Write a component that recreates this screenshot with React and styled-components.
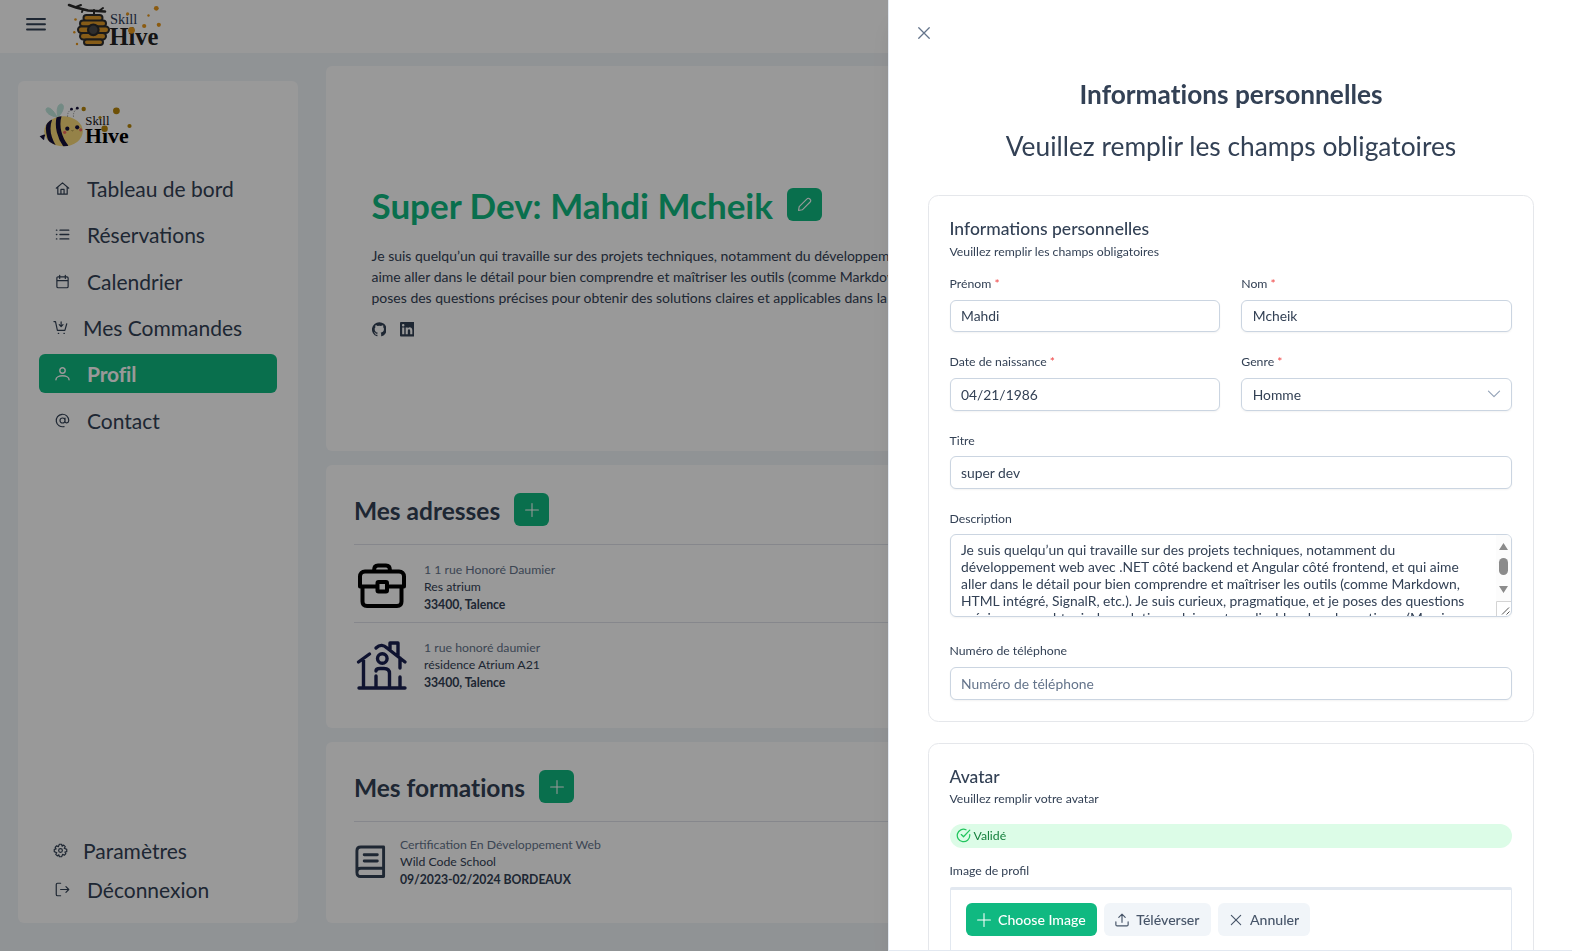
import React from 'react';
import styled, { createGlobalStyle } from 'styled-components';

const GlobalStyle = createGlobalStyle`
  html { font-size: 14px; }
  body {
    margin: 0;
    background: #f1f5f9;
    color: #334155;
    font-family: Lato, "Open Sans", sans-serif;
    overflow: hidden;
  }
  *, *::before, *::after { box-sizing: border-box; }
  h1, h2, h3, p { margin: 0; }
  button, input { font-family: inherit; }
`;

const Page = styled.div`
  height: 951px;
  display: flex;
  flex-direction: column;
  overflow: hidden;
`;

const Topbar = styled.header`
  height: 53px;
  flex: none;
  background: #fff;
  display: flex;
  align-items: flex-start;
  padding-left: 26px;
`;

const MenuIcon = styled.svg`
  width: 20px;
  height: 14px;
  margin: 17px 21px 0 0;
`;

const Layout = styled.div`
  flex: 1;
  display: flex;
  min-height: 0;
`;

const Sidebar = styled.aside`
  width: 280px;
  height: 842px;
  flex: none;
  margin: 28px 27.5px 0 18px;
  padding: 18px 21px 14px;
  background: #fff;
  border-radius: 6px;
  display: flex;
  flex-direction: column;
`;

const Nav = styled.nav`
  display: flex;
  flex-direction: column;
  gap: ${p => p.$gap || 0}px;
`;

const NavItem = styled.a`
  height: 39.2px;
  display: flex;
  align-items: center;
  gap: ${p => (p.$tight ? 16 : 18)}px;
  padding-left: ${p => (p.$tight ? 14 : 16)}px;
  border-radius: 6px;
  font-size: 21px;
  line-height: 25px;
  font-weight: ${p => (p.$active ? 700 : 400)};
  letter-spacing: ${p => (p.$active ? '-0.15px' : 'normal')};
  font-variant-ligatures: common-ligatures;
  color: ${p => (p.$active ? '#fff' : '#334155')};
  background: ${p => (p.$active ? '#10b981' : 'transparent')};
`;

const Icon = styled.svg`
  width: ${p => p.$size || 14}px;
  height: ${p => p.$size || 14}px;
  flex: none;
  fill: none;
  stroke: currentColor;
  stroke-width: ${p => p.$stroke || 1.8};
  stroke-linecap: round;
  stroke-linejoin: round;
`;

const NavIcon = styled(Icon)`
  width: 15px;
  height: 15px;
  margin: 0 -0.5px;
`;

const Spacer = styled.div`
  flex: 1;
`;

const Main = styled.main`
  flex: 1;
  padding: 13px 18px 0 0;
  display: flex;
  flex-direction: column;
  gap: 14px;
`;

const Card = styled.section`
  background: #fff;
  border-radius: 6px;
  height: ${p => p.$height}px;
  flex: none;
  padding: ${p => p.$pad || '28px 28px 28px 28.5px'};
`;

const ProfileTitle = styled.h1`
  font-size: 35px;
  line-height: 34px;
  font-weight: 700;
  color: #10b981;
`;

const TitleRow = styled.div`
  display: flex;
  align-items: flex-start;
  gap: 14px;
`;

const SquareButton = styled.button`
  width: 35px;
  height: 33px;
  padding: 0;
  border: 0;
  border-radius: 6px;
  background: #10b981;
  color: #fff;
  display: flex;
  align-items: center;
  justify-content: center;
`;

const Bio = styled.p`
  margin-top: 23px;
  font-size: 14px;
  line-height: 21px;
  white-space: nowrap;
`;

const Socials = styled.div`
  display: flex;
  gap: 13.5px;
  margin-top: 14px;
`;

const SocialIcon = styled.svg`
  width: 14.5px;
  height: 14.5px;
  fill: currentColor;
`;

const CardTitle = styled.h2`
  font-size: 24.5px;
  line-height: 35px;
  font-weight: 700;
  font-variant-ligatures: none;
`;

const Entry = styled.div`
  height: 78px;
  border-top: 1px solid #dfe2ea;
  margin-top: ${p => (p.$first ? 16 : 0)}px;
  padding-top: ${p => p.$top}px;
  display: flex;
  gap: ${p => p.$gap}px;
`;

const EntryText = styled.div`
  display: flex;
  flex-direction: column;
  font-size: 12.25px;
  line-height: 17px;
`;

const Muted = styled.span`
  color: #64748b;
`;

const Strong = styled.span`
  font-weight: 700;
  line-height: 20px;
  letter-spacing: -0.05px;
`;

const BookSlot = styled.div`
  padding-top: 9px;
  display: flex;
  align-items: flex-start;
`;

const Mask = styled.div`
  position: fixed;
  inset: 0;
  background: rgba(0, 0, 0, 0.4);
`;

const Drawer = styled.aside`
  position: fixed;
  top: 0;
  right: 0;
  bottom: 0;
  width: 684px;
  background: #fff;
  border-left: 1px solid #e2e8f0;
  border-bottom: 1px solid #e2e8f0;
  box-shadow: 0 20px 25px -5px rgba(0, 0, 0, 0.1), 0 8px 10px -6px rgba(0, 0, 0, 0.1);
  padding: 26px 38px 0 39px;
  display: flex;
  flex-direction: column;
  overflow: hidden;
`;

const CloseButton = styled.button`
  width: 14px;
  height: 14px;
  padding: 0;
  border: 0;
  background: none;
  color: #64748b;
  margin-left: -11px;
  display: flex;
  flex: none;
`;

const DrawerTitle = styled.h2`
  margin-top: 38px;
  font-size: 26.25px;
  line-height: 32px;
  font-weight: 700;
  text-align: center;
  font-variant-ligatures: none;
`;

const DrawerSubtitle = styled.p`
  margin: 20px 0 33px;
  font-size: 26.35px;
  line-height: 32px;
  text-align: center;
`;

const Panel = styled.section`
  border: 1px solid #e5e7eb;
  border-radius: 10.5px;
  padding: 21px 21px 21px 20.5px;
  margin-bottom: 21px;
  flex: none;
`;

const PanelTitle = styled.h3`
  font-size: 17.5px;
  line-height: 24.5px;
  font-weight: 500;
`;

const PanelHint = styled.p`
  margin-top: 1px;
  font-size: 12.25px;
  line-height: 17.5px;
`;

const Fields = styled.div`
  margin-top: 15px;
  display: grid;
  grid-template-columns: 1fr 1fr;
  gap: 21px;
`;

const Field = styled.div`
  grid-column: ${p => (p.$wide ? 'span 2' : 'auto')};
  padding-bottom: ${p => p.$after || 0}px;
`;

const Label = styled.label`
  display: block;
  margin-bottom: 7px;
  font-size: 12.25px;
  line-height: 17.5px;
`;

const Required = styled.span`
  color: #ef4444;
`;

const Input = styled.input`
  display: block;
  width: 100%;
  height: 32.8px;
  padding: 0 10.5px;
  border: 1px solid #cbd5e1;
  border-radius: 6px;
  box-shadow: 0 1px 2px rgba(18, 18, 23, 0.05);
  font-size: 13.85px;
  color: #334155;
  background: #fff;
  &::placeholder { color: #64748b; }
`;

const Select = styled.div`
  height: 32.8px;
  padding: 0 10.5px;
  border: 1px solid #cbd5e1;
  border-radius: 6px;
  box-shadow: 0 1px 2px rgba(18, 18, 23, 0.05);
  font-size: 13.85px;
  display: flex;
  align-items: center;
  justify-content: space-between;
`;

const TextBox = styled.div`
  height: 83px;
  border: 1px solid #cbd5e1;
  border-radius: 6px;
  box-shadow: 0 1px 2px rgba(18, 18, 23, 0.05);
  display: flex;
  overflow: hidden;
`;

const TextBoxContent = styled.div`
  flex: 1;
  padding: 7px 0 0 10.5px;
  font-size: 13.85px;
  line-height: 16.8px;
  white-space: nowrap;
`;

const Scrollbar = styled.svg`
  width: 15px;
  height: 81px;
  flex: none;
`;

const Status = styled.div`
  margin-top: 16px;
  height: 24px;
  border-radius: 12px;
  background: #dcfce7;
  color: #15803d;
  display: flex;
  align-items: center;
  gap: 3px;
  padding-left: 6px;
  font-size: 12.25px;
`;

const StatusIcon = styled(Icon)`
  color: #22c55e;
`;

const UploadLabel = styled(Label)`
  margin-top: 14px;
  margin-bottom: 7.5px;
`;

const Upload = styled.div`
  height: 120px;
  border: 1px solid #e2e8f0;
  border-top: 3px solid #e2e8f0;
  border-radius: 2px 2px 0 0;
  padding: 13px 15px;
  display: flex;
  gap: 7px;
`;

const UploadButton = styled.button`
  height: 33px;
  padding: 0 11px 0 11.5px;
  border: 0;
  border-radius: 6px;
  background: ${p => (p.$primary ? '#10b981' : '#f1f5f9')};
  color: ${p => (p.$primary ? '#fff' : '#475569')};
  font-size: 14.1px;
  font-weight: 500;
  display: flex;
  align-items: center;
  gap: 7px;
  white-space: nowrap;
  ${Icon} { margin-top: 2px; }
`;

const TopLogoSvg = styled.svg`
  width: 96px;
  height: 50px;
`;

const BeeLogoSvg = styled.svg`
  width: 96px;
  height: 52px;
  margin-bottom: 18px;
`;

const serif = '"Liberation Serif", "Times New Roman", serif';

function HiveLogo() {
  return (
    <TopLogoSvg viewBox="67 0 96 50">
      <g stroke="#2b2b2b" fill="none" strokeLinecap="round">
        <path d="M69 5l7 2.5 12 3 17 1" strokeWidth="2.6" />
        <path d="M76 7l5-2M83 9l-1 3M94 10v5M99 11l4-3" strokeWidth="2" />
      </g>
      <g stroke="#2e2e2e" strokeWidth="2" fill="#e09a28">
        <rect x="83.5" y="15" width="19" height="6" rx="3" />
        <rect x="80" y="20.5" width="26" height="6" rx="3" />
        <rect x="78" y="26.5" width="31" height="6.5" rx="3.2" />
        <rect x="80" y="33" width="26" height="6.5" rx="3.2" />
        <rect x="84" y="39.5" width="19" height="5.5" rx="2.7" />
      </g>
      <circle cx="93.3" cy="29.8" r="5.3" fill="#4b4b4b" stroke="#2b2b2b" strokeWidth="2.2" />
      <g fill="#e8981c">
        <circle cx="156.3" cy="8.3" r="2.4" />
        <circle cx="148.5" cy="15.5" r="1.2" />
        <circle cx="144.2" cy="26" r="2.1" />
        <circle cx="158.8" cy="24.8" r="2.1" />
        <circle cx="75.5" cy="19.5" r="1.3" />
        <circle cx="74.3" cy="32.3" r="1.2" />
        <circle cx="77" cy="44" r="1.2" />
      </g>
      <text x="110" y="24" fontFamily={serif} fontSize="14.5" fill="#2d3a55">Skill</text>
      <text x="109.5" y="45" fontFamily={serif} fontSize="24.5" fontWeight="700" fill="#222">Hive</text>
      <circle cx="127.6" cy="13.8" r="1.6" fill="#e8981c" />
      <circle cx="131.5" cy="30.3" r="3.4" fill="#e8981c" />
    </TopLogoSvg>
  );
}

function BeeLogo() {
  return (
    <BeeLogoSvg viewBox="39 99 96 52">
      <clipPath id="bee-body">
        <ellipse cx="63.5" cy="131.3" rx="19.3" ry="15" />
      </clipPath>
      <path d="M57 117c-7-1-11-4-11-8 2-3 7 0 11 8zM58 117c-2-8 0-13 3.500-13 3.500 1 2 8-3.500 13z" fill="#bfe6dc" stroke="#bfe6dc" />
      <path d="M45 135l-4 1.500 3 3" fill="#15103a" stroke="#15103a" strokeWidth="1.500" />
      <ellipse cx="63.500" cy="131.300" rx="19.300" ry="15" fill="#f8d978" />
      <path clipPath="url(#bee-body)" d="M50 119c-3.500 9-2 18 4 28M59.500 115c-3.500 11 0 23 7 32" fill="none" stroke="#15103a" strokeWidth="4.600" />
      <path d="M67.500 117c0-4 1-6 3.500-7M73.500 117c-.5-4 1-7 3.500-8" fill="none" stroke="#777" strokeWidth=".6" strokeDasharray="1.500 1" />
      <g fill="#15103a">
        <circle cx="71.500" cy="109.200" r="1.400" />
        <circle cx="77.300" cy="108.200" r="1.400" />
        <circle cx="67.300" cy="128.700" r="2.100" />
        <circle cx="77.200" cy="127.300" r="2.100" />
      </g>
      <circle cx="64.700" cy="132.300" r="1.600" fill="#f4695f" />
      <circle cx="80.700" cy="129.800" r="1.600" fill="#f4695f" />
      <path d="M71.500 130.500q1 .8 2-.2" fill="none" stroke="#6b5a2a" strokeWidth=".6" />
      <text x="85.300" y="124.700" fontFamily={serif} fontSize="12.800" fill="#111">Skill</text>
      <text x="85" y="142.800" fontFamily={serif} fontSize="21.800" fontWeight="700" fill="#000">Hive</text>
      <g fill="#b8860b">
        <circle cx="83.700" cy="109" r="2.200" />
        <circle cx="116.400" cy="110.800" r="3.400" />
        <circle cx="129.500" cy="126" r="2.100" />
        <circle cx="104.600" cy="128.700" r="3.200" />
        <circle cx="100" cy="117.500" r="1.600" />
      </g>
    </BeeLogoSvg>
  );
}

const glyphs = {
  home: <path d="M2 11.500L12 3l10 8.500M4.500 9.500V21h15V9.500M9.500 21v-7.500h5V21" />,
  list: <path d="M8 5h14M8 12h14M8 19h14M2.300 5h.6M2.300 12h.6M2.300 19h.6" strokeWidth="2.200" />,
  calendar: <path d="M5 4.500h14a2 2 0 0 1 2 2V20a2 2 0 0 1-2 2H5a2 2 0 0 1-2-2V6.500a2 2 0 0 1 2-2zM3 10.500h18M7.500 2v5M16.500 2v5" />,
  cart: <path d="M1.500 2.500H4l3 14h12L22 6M13 3v7M10 7.500l3 3 3-3M8.500 21.500h.6M17.500 21.500h.6" />,
  user: <path d="M12 11.500a4.300 4.300 0 1 0 0-8.600 4.300 4.300 0 0 0 0 8.600zM1.500 22c0-8.500 21-8.500 21 0" />,
  at: <path d="M16 12a4 4 0 1 1-8 0 4 4 0 0 1 8 0zM16 8v5.500c0 3.500 6 3 6-1.500A10 10 0 1 0 14.500 21.700" />,
  cog: <path d="M12 15a3 3 0 1 0 0-6 3 3 0 0 0 0 6zM10.200 2h3.600l.7 3 2.600-1.600 2.500 2.500L18 8.500l4 1.700v3.600l-3 .7 1.600 2.600-2.500 2.500L15.500 18l-1.700 4h-3.600l-.7-3-2.600 1.600-2.500-2.500L6 15.500l-4-1.700v-3.600l3-.7-1.600-2.600 2.500-2.500L8.500 6z" />,
  logout: <path d="M9 2H4a2 2 0 0 0-2 2v16a2 2 0 0 0 2 2h5M9 12h13M17.500 7.500L22 12l-4.500 4.500" />,
  pencil: <path d="M2.500 21.500l1-6L16 3a2.600 2.600 0 0 1 4-.2l1.200 1.200a2.600 2.600 0 0 1-.2 4L8.500 20.500z" />,
  plus: <path d="M12 1v22M1 12h22" />,
  times: <path d="M3 3l18 18M21 3L3 21" />,
  chevron: <path d="M2.500 7l9.500 9.500L21.500 7" />,
  upload: <path d="M12 16V2M6.500 7.500L12 2l5.500 5.500M1.500 15v5a2 2 0 0 0 2 2h17a2 2 0 0 0 2-2v-5" />,
  check: <path d="M22 10.500V12A10 10 0 1 1 16 2.800M22 3.500L12 14l-3.500-3.500" />,
};

const topItems = [
  { icon: 'home', label: 'Tableau de bord' },
  { icon: 'list', label: 'Réservations' },
  { icon: 'calendar', label: 'Calendrier' },
  { icon: 'cart', label: 'Mes Commandes', tight: true },
  { icon: 'user', label: 'Profil', active: true },
  { icon: 'at', label: 'Contact' },
];

const bottomItems = [
  { icon: 'cog', label: 'Paramètres', tight: true },
  { icon: 'logout', label: 'Déconnexion' },
];

function NavList({ items, gap }) {
  return (
    <Nav $gap={gap}>
      {items.map(item => (
        <NavItem key={item.label} $active={item.active} $tight={item.tight}>
          <NavIcon viewBox="0 0 24 24" $stroke={item.active ? 2.3 : 1.9}>{glyphs[item.icon]}</NavIcon>
          {item.label}
        </NavItem>
      ))}
    </Nav>
  );
}

function Briefcase() {
  return (
    <Icon viewBox="0 1.5 56 56" $size={56} $stroke={4} color="#000">
      <path d="M20 11c0-4 2-5 4-5h8c2 0 4 1 4 5M11 12h34c3 0 5 2 5 5v10H6V17c0-3 2-5 5-5zM8.500 28v14c0 3 1.500 4.500 4.500 4.500h30c3 0 4.500-1.500 4.500-4.500V28" />
      <rect x="23.500" y="22.500" width="9.500" height="9.500" rx="1" fill="#fff" />
    </Icon>
  );
}

function House() {
  return (
    <Icon viewBox="0 1 56 56" $size={56} $stroke={3.4} color="#1a2150">
      <path d="M5 50h46M9.500 50V22M4.500 24l11-8M22 10c4-4 8-3 11 0l18 14M36 11V5h8v13M46 20v10M46 39v11M22 38v12M22 33c0-2 2-2.500 4-2.500h4c4 0 5.500 2 5.500 5V50" />
      <circle cx="28.300" cy="20.500" r="4.800" />
    </Icon>
  );
}

function Book() {
  return (
    <Icon viewBox="0 0 32 34" $size={33} $stroke={3}>
      <path d="M29.500 24V2H6C3.500 2 2 3.500 2 6v22c0 3 1.500 4.500 4 4.500h23.500V24H6c-2.500 0-4 1.500-4 4M9.500 10h13.500M9.500 16.500h13.500M29.500 24v8" />
    </Icon>
  );
}

function RequiredLabel({ children }) {
  return <Label>{children} <Required>*</Required></Label>;
}

export default function App() {
  return (
    <>
      <GlobalStyle />
      <Page>
        <Topbar>
          <MenuIcon viewBox="0 0 20 14">
            <path d="M1 2h18M1 7.200h18M1 12.500h18" stroke="#334155" strokeWidth="1.900" strokeLinecap="round" />
          </MenuIcon>
          <HiveLogo />
        </Topbar>
        <Layout>
          <Sidebar>
            <BeeLogo />
            <NavList items={topItems} gap={7.1} />
            <Spacer />
            <NavList items={bottomItems} gap={0} />
          </Sidebar>
          <Main>
            <Card $height={385} $pad="122px 46px">
              <TitleRow>
                <ProfileTitle>Super Dev: Mahdi Mcheik</ProfileTitle>
                <SquareButton><Icon viewBox="0 0 24 24" $size={15}>{glyphs.pencil}</Icon></SquareButton>
              </TitleRow>
              <Bio>
                Je suis quelqu’un qui travaille sur des projets techniques, notamment du développement web avec .NET<br />
                aime aller dans le détail pour bien comprendre et maîtriser les outils (comme Markdown, HTML intégré<br />
                poses des questions précises pour obtenir des solutions claires et applicables dans la pratique.
              </Bio>
              <Socials>
                <SocialIcon viewBox="0 0 24 24">
                  <path d="M12 .3a12 12 0 0 0-3.800 23.400c.6.1.8-.3.8-.6v-2c-3.300.7-4-1.600-4-1.600-.6-1.400-1.400-1.800-1.400-1.800-1-.7.1-.7.1-.7 1.200.1 1.900 1.200 1.900 1.200 1 1.900 2.800 1.300 3.500 1 .1-.8.4-1.300.8-1.600-2.700-.3-5.500-1.300-5.500-6 0-1.200.5-2.300 1.300-3.100-.2-.4-.6-1.600 0-3.200 0 0 1-.3 3.400 1.200a11.500 11.500 0 0 1 6 0c2.300-1.500 3.300-1.200 3.300-1.200.6 1.600.2 2.800.1 3.200.8.8 1.300 1.900 1.300 3.200 0 4.600-2.800 5.600-5.500 5.900.5.4.9 1 .9 2.200v3.300c0 .3.1.7.8.6A12 12 0 0 0 12 .3" />
                </SocialIcon>
                <SocialIcon viewBox="0 0 24 24">
                  <path fillRule="evenodd" d="M1.500 0h21A1.500 1.500 0 0 1 24 1.500v21a1.500 1.500 0 0 1-1.500 1.500h-21A1.500 1.500 0 0 1 0 22.500v-21A1.500 1.500 0 0 1 1.500 0zM3.600 9v11.400h3.500V9zM5.300 3.300a2.100 2.100 0 1 0 0 4.200 2.100 2.100 0 0 0 0-4.200zM9.400 9v11.400h3.500v-5.700c0-3.600 4-3.400 4 0v5.700h3.500v-6.200c0-6-5.300-6.500-7.500-3.700V9z" />
                </SocialIcon>
              </Socials>
            </Card>
            <Card $height={263}>
              <TitleRow>
                <CardTitle>Mes adresses</CardTitle>
                <SquareButton><Icon viewBox="0 0 24 24">{glyphs.plus}</Icon></SquareButton>
              </TitleRow>
              <Entry $first $top={15.5} $gap={14}>
                <Briefcase />
                <EntryText>
                  <Muted>1 1 rue Honoré Daumier</Muted>
                  <span>Res atrium</span>
                  <Strong>33400, Talence</Strong>
                </EntryText>
              </Entry>
              <Entry $top={15.5} $gap={14}>
                <House />
                <EntryText>
                  <Muted>1 rue honoré daumier</Muted>
                  <span>résidence Atrium A21</span>
                  <Strong>33400, Talence</Strong>
                </EntryText>
              </Entry>
            </Card>
            <Card $height={181}>
              <TitleRow>
                <CardTitle>Mes formations</CardTitle>
                <SquareButton><Icon viewBox="0 0 24 24">{glyphs.plus}</Icon></SquareButton>
              </TitleRow>
              <Entry $first $top={13.5} $gap={13}>
                <BookSlot><Book /></BookSlot>
                <EntryText>
                  <Muted>Certification En Développement Web</Muted>
                  <span>Wild Code School</span>
                  <Strong>09/2023-02/2024 BORDEAUX</Strong>
                </EntryText>
              </Entry>
            </Card>
          </Main>
        </Layout>
      </Page>
      <Mask />
      <Drawer>
        <CloseButton><Icon viewBox="0 0 24 24" $stroke={2.2}>{glyphs.times}</Icon></CloseButton>
        <DrawerTitle>Informations personnelles</DrawerTitle>
        <DrawerSubtitle>Veuillez remplir les champs obligatoires</DrawerSubtitle>
        <Panel>
          <PanelTitle>Informations personnelles</PanelTitle>
          <PanelHint>Veuillez remplir les champs obligatoires</PanelHint>
          <Fields>
            <Field>
              <RequiredLabel>Prénom</RequiredLabel>
              <Input defaultValue="Mahdi" />
            </Field>
            <Field>
              <RequiredLabel>Nom</RequiredLabel>
              <Input defaultValue="Mcheik" />
            </Field>
            <Field>
              <RequiredLabel>Date de naissance</RequiredLabel>
              <Input defaultValue="04/21/1986" />
            </Field>
            <Field>
              <RequiredLabel>Genre</RequiredLabel>
              <Select>
                Homme
                <Icon viewBox="0 0 24 24" color="#94a3b8" $stroke={2}>{glyphs.chevron}</Icon>
              </Select>
            </Field>
            <Field $wide>
              <Label>Titre</Label>
              <Input defaultValue="super dev" />
            </Field>
            <Field $wide $after={4}>
              <Label>Description</Label>
              <TextBox>
                <TextBoxContent>
                  Je suis quelqu’un qui travaille sur des projets techniques, notamment du<br />
                  développement web avec .NET côté backend et Angular côté frontend, et qui aime<br />
                  aller dans le détail pour bien comprendre et maîtriser les outils (comme Markdown,<br />
                  HTML intégré, SignalR, etc.). Je suis curieux, pragmatique, et je poses des questions<br />
                  précises pour obtenir des solutions claires et applicables dans la pratique. (Merci
                </TextBoxContent>
                <Scrollbar viewBox="0 0 15 81">
                  <rect width="15" height="66" fill="#fcfcfc" />
                  <path d="M7.500 8l4.500 7H3z M7.500 58l4.500-7H3z" fill="#8b8b8b" />
                  <rect x="3" y="23" width="9" height="17" rx="4.500" fill="#8b8b8b" />
                  <path d="M.5 81V66.500H15" fill="none" stroke="#d4d4d4" />
                  <path d="M6 79.500l7-7M10.500 79.500l3-3" stroke="#555" />
                </Scrollbar>
              </TextBox>
            </Field>
            <Field $wide>
              <Label>Numéro de téléphone</Label>
              <Input placeholder="Numéro de téléphone" />
            </Field>
          </Fields>
        </Panel>
        <Panel>
          <PanelTitle>Avatar</PanelTitle>
          <PanelHint>Veuillez remplir votre avatar</PanelHint>
          <Status>
            <StatusIcon viewBox="0 0 24 24" $size={15} $stroke={2}>{glyphs.check}</StatusIcon>
            Validé
          </Status>
          <UploadLabel>Image de profil</UploadLabel>
          <Upload>
            <UploadButton $primary><Icon viewBox="0 0 24 24">{glyphs.plus}</Icon>Choose Image</UploadButton>
            <UploadButton><Icon viewBox="0 0 24 24" $stroke={2}>{glyphs.upload}</Icon>Téléverser</UploadButton>
            <UploadButton><Icon viewBox="-1.5 -1.5 27 27" $stroke={2.2}>{glyphs.times}</Icon>Annuler</UploadButton>
          </Upload>
        </Panel>
      </Drawer>
    </>
  );
}
